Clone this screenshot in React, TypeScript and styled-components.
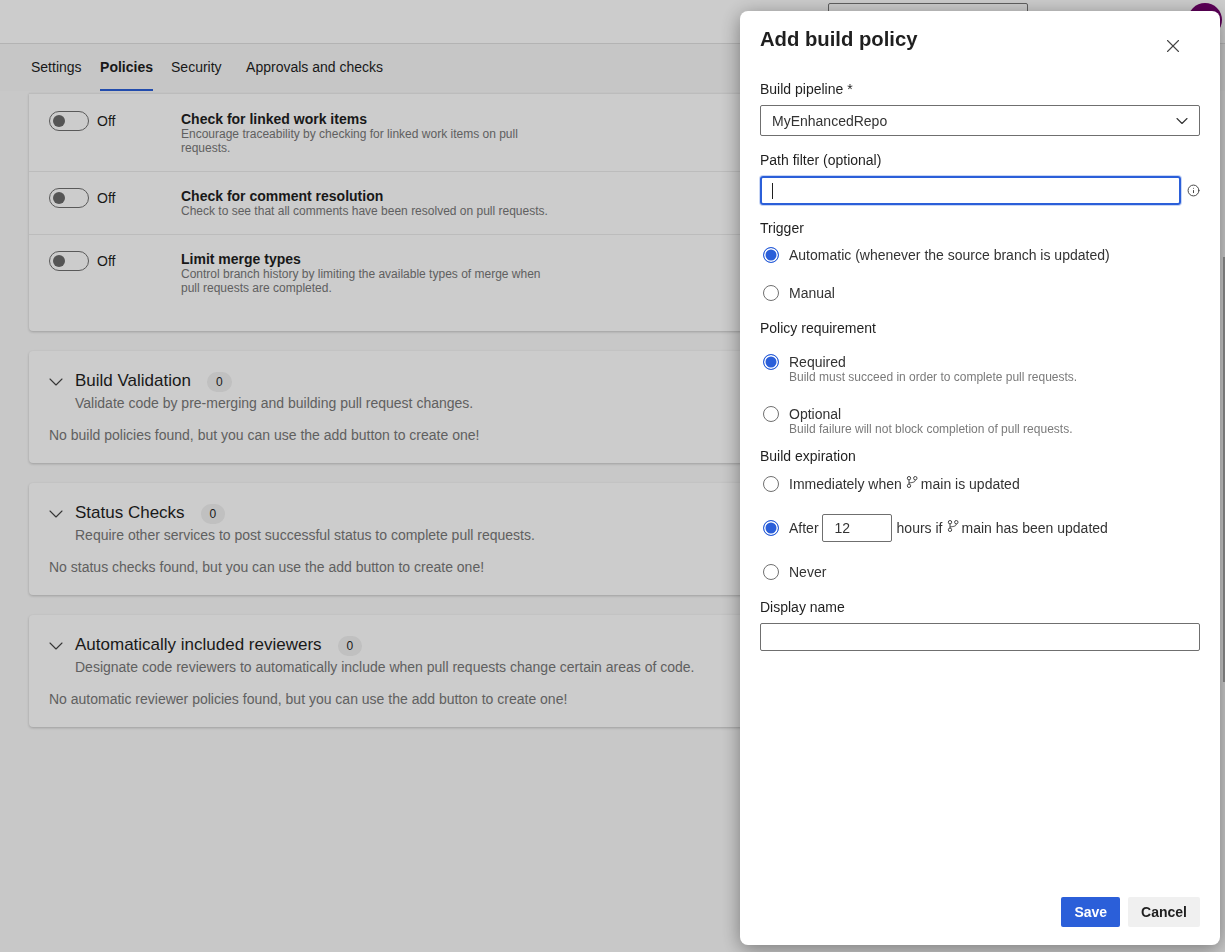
import { createGlobalStyle, styled } from "styled-components";
import { LuChevronDown, LuInfo, LuX } from "react-icons/lu";

const GlobalStyle = createGlobalStyle`
  html, body {
    margin: 0;
    height: 100%;
    overflow: hidden;
    font-family: "Liberation Sans", Arial, sans-serif;
    font-size: 14px;
    color: #1f1f1f;
    background: #fbfbfb;
  }
`;

const Page = styled.div`
  height: 952px;
  display: flex;
  flex-direction: column;
  overflow: hidden;
`;

const TopBar = styled.header`
  height: 40px;
  flex: none;
  display: flex;
  align-items: flex-start;
  padding: 3px 16px 0 828px;
  border-bottom: 1px solid #e0e0e0;
  background: #ffffff;
`;

const SearchBox = styled.div`
  width: 198px;
  height: 30px;
  border: 1px solid #777;
  border-radius: 2px;
`;

const Avatar = styled.div`
  width: 34px;
  height: 34px;
  margin-left: auto;
  margin-right: -13px;
  border-radius: 50%;
  background: #73006e;
`;

const Tabs = styled.nav`
  height: 47px;
  flex: none;
  display: flex;
  padding-left: 31px;
  background: #f8f8f8;
`;

const Tab = styled.div<{ $active?: boolean; $gap: number }>`
  margin-right: ${(p) => p.$gap}px;
  padding-top: 15px;
  line-height: 16px;
  font-weight: ${(p) => (p.$active ? 700 : 400)};
  border-bottom: 2px solid ${(p) => (p.$active ? "#2b5fd9" : "transparent")};
`;

const Content = styled.main`
  flex: 1;
  overflow: hidden;
  display: flex;
  flex-direction: column;
  gap: 20px;
  padding: 2px 30px 0 29px;
`;

const Card = styled.section`
  background: #ffffff;
  border-radius: 4px;
  box-shadow: 0 1px 3px rgba(0, 0, 0, 0.22);
`;

const PolicyCard = styled(Card)`
  height: 238px;
  padding-top: 1px;
  box-sizing: border-box;
  border-radius: 0 0 4px 4px;
  border-top: 1px solid #ececec;
`;

const PolicyRow = styled.div<{ $height: number; $last?: boolean }>`
  height: ${(p) => p.$height}px;
  box-sizing: border-box;
  display: flex;
  padding: 16px 20px 0;
  border-bottom: ${(p) => (p.$last ? "none" : "1px solid #ebebeb")};
`;

const ToggleCell = styled.div`
  width: 132px;
  flex: none;
  display: flex;
  align-items: flex-start;
  gap: 8px;
`;

const Toggle = styled.span`
  width: 40px;
  height: 20px;
  flex: none;
  display: flex;
  align-items: center;
  padding-left: 3px;
  box-sizing: border-box;
  border: 1px solid #707070;
  border-radius: 10px;
`;

const Knob = styled.span`
  width: 12px;
  height: 12px;
  border-radius: 50%;
  background: #6b6b6b;
`;

const OffLabel = styled.span`
  line-height: 20px;
`;

const PolicyText = styled.div`
  width: 375px;
`;

const PolicyTitle = styled.div`
  font-weight: 700;
  line-height: 16px;
`;

const PolicyDesc = styled.div`
  font-size: 12px;
  line-height: 14px;
  color: #787878;
`;

const SectionCard = styled(Card)`
  height: 112px;
  box-sizing: border-box;
  padding: 20px 20px 0;
  display: flex;
  flex-direction: column;
`;

const SectionHead = styled.div`
  display: flex;
  align-items: flex-start;
`;

const Chevron = styled.span`
  width: 31px;
  flex: none;
  margin: -1px 0 -4px -5px;
  display: flex;
  color: #444;
`;

const SectionTitle = styled.div`
  font-size: 17px;
  line-height: 20px;
`;

const Count = styled.span`
  margin-left: 16px;
  margin-top: 1px;
  padding: 0 9px;
  height: 20px;
  border-radius: 10px;
  background: #f0f0f0;
  font-size: 12px;
  line-height: 20px;
  text-align: center;
`;

const SectionDesc = styled.div`
  margin-left: 26px;
  line-height: 16px;
  margin-top: 3px;
  color: #787878;
`;

const EmptyNote = styled.div`
  margin-top: 16px;
  line-height: 16px;
  color: #787878;
`;

const Backdrop = styled.div`
  position: fixed;
  inset: 0;
  background: rgba(0, 0, 0, 0.2);
`;

const ScrollThumb = styled.div`
  position: fixed;
  top: 257px;
  right: 0;
  width: 2px;
  height: 425px;
  background: #8a8a8a;
`;

const Panel = styled.aside`
  position: fixed;
  top: 11px;
  left: 740px;
  width: 480px;
  height: 934px;
  box-sizing: border-box;
  padding: 0 20px;
  display: flex;
  flex-direction: column;
  background: #ffffff;
  border-radius: 8px;
  box-shadow: 0 4px 20px rgba(0, 0, 0, 0.4);
`;

const PanelHead = styled.div`
  height: 70px;
  flex: none;
  display: flex;
  justify-content: space-between;
  align-items: flex-start;
`;

const PanelTitle = styled.h1`
  margin: 15px 0 0;
  font-size: 20.25px;
  line-height: 26px;
  font-weight: 700;
`;

const CloseButton = styled.span`
  margin: 24px 16px 0 0;
  display: flex;
  color: #444;
`;

const FieldLabel = styled.div<{ $top?: number }>`
  line-height: 16px;
  margin-top: ${(p) => p.$top ?? 0}px;
`;

const Select = styled.div`
  margin-top: 8px;
  height: 31px;
  box-sizing: border-box;
  display: flex;
  align-items: center;
  justify-content: space-between;
  padding: 0 7px 0 11px;
  border: 1px solid #6f6f6f;
  border-radius: 2px;
  color: #333;
`;

const FocusRow = styled.div`
  margin-top: 8px;
  display: flex;
  align-items: center;
  justify-content: space-between;
`;

const FocusInput = styled.div`
  width: 421px;
  height: 29px;
  box-sizing: border-box;
  display: flex;
  align-items: center;
  padding-left: 10px;
  border: 2px solid #2b5fd9;
  border-radius: 3px;
  box-shadow: 0 0 0 1px #c8d6f5;
`;

const Caret = styled.span`
  width: 1px;
  height: 16px;
  background: #1f1f1f;
`;

const InfoIcon = styled.span`
  display: flex;
  color: #444;
`;

const TextBox = styled.div`
  margin-top: 8px;
  height: 28px;
  box-sizing: border-box;
  border: 1px solid #6f6f6f;
  border-radius: 2px;
`;

const RadioRow = styled.div<{ $top: number; $height: number }>`
  margin-top: ${(p) => p.$top}px;
  height: ${(p) => p.$height}px;
  display: flex;
  align-items: center;
  gap: 10px;
  padding-left: 3px;
`;

const Radio = styled.span<{ $on?: boolean }>`
  width: 16px;
  height: 16px;
  flex: none;
  box-sizing: border-box;
  border: ${(p) => (p.$on ? "1.5px solid #2b5fd9" : "1px solid #707070")};
  border-radius: 50%;
  background: ${(p) => (p.$on ? "#2b5fd9" : "#fff")};
  box-shadow: ${(p) => (p.$on ? "inset 0 0 0 1.5px #fff" : "none")};
`;

const RadioBlock = styled.div`
  display: flex;
  flex-direction: column;
  color: #333;
`;

const RadioText = styled.div`
  line-height: 16px;
  color: #333;
  display: flex;
  align-items: center;
`;

const RadioHint = styled.div`
  font-size: 12px;
  line-height: 14px;
  color: #7a7a7a;
`;

const StackRadio = styled.div<{ $top: number }>`
  margin-top: ${(p) => p.$top}px;
  display: flex;
  align-items: flex-start;
  gap: 10px;
  padding-left: 3px;
`;

const HoursInput = styled.div`
  width: 70px;
  height: 28px;
  box-sizing: border-box;
  margin: 0 5px 0 3px;
  padding-left: 12px;
  border: 1px solid #6f6f6f;
  border-radius: 2px;
  line-height: 26px;
`;

const BranchSvg = styled.svg`
  width: 12px;
  height: 12px;
  margin: -4px 3px 0 4px;
  fill: none;
  stroke: #444;
  stroke-width: 1;
`;

const PanelFoot = styled.div`
  margin-top: auto;
  padding-bottom: 18px;
  display: flex;
  justify-content: flex-end;
  gap: 8px;
`;

const Button = styled.button<{ $primary?: boolean }>`
  height: 30px;
  padding: 0 13px;
  border: none;
  border-radius: 2px;
  font: 700 14px "Liberation Sans", Arial, sans-serif;
  color: ${(p) => (p.$primary ? "#fff" : "#1f1f1f")};
  background: ${(p) => (p.$primary ? "#2b5fd9" : "#f0f0f0")};
`;

function BranchIcon() {
  return (
    <BranchSvg viewBox="0 0 12 12">
      <circle cx="3" cy="2.2" r="1.7" />
      <circle cx="9.3" cy="2.2" r="1.7" />
      <circle cx="3" cy="9.8" r="1.7" />
      <path d="M3 3.9v4.2M9.3 3.9c0 2.2-2.2 2.6-6.3 3" />
    </BranchSvg>
  );
}

const policies = [
  {
    title: "Check for linked work items",
    desc: "Encourage traceability by checking for linked work items on pull requests.",
    height: 77,
  },
  {
    title: "Check for comment resolution",
    desc: "Check to see that all comments have been resolved on pull requests.",
    height: 63,
  },
  {
    title: "Limit merge types",
    desc: "Control branch history by limiting the available types of merge when pull requests are completed.",
    height: 95,
  },
];

const sections = [
  {
    title: "Build Validation",
    desc: "Validate code by pre-merging and building pull request changes.",
    note: "No build policies found, but you can use the add button to create one!",
  },
  {
    title: "Status Checks",
    desc: "Require other services to post successful status to complete pull requests.",
    note: "No status checks found, but you can use the add button to create one!",
  },
  {
    title: "Automatically included reviewers",
    desc: "Designate code reviewers to automatically include when pull requests change certain areas of code.",
    note: "No automatic reviewer policies found, but you can use the add button to create one!",
  },
];

export default function App() {
  return (
    <>
      <GlobalStyle />
      <Page>
        <TopBar>
          <SearchBox />
          <Avatar />
        </TopBar>
        <Tabs>
          <Tab $gap={18.5}>Settings</Tab>
          <Tab $gap={18} $active>
            Policies
          </Tab>
          <Tab $gap={24.5}>Security</Tab>
          <Tab $gap={0}>Approvals and checks</Tab>
        </Tabs>
        <Content>
          <PolicyCard>
            {policies.map((item, i) => (
              <PolicyRow key={item.title} $height={item.height} $last={i === 2}>
                <ToggleCell>
                  <Toggle>
                    <Knob />
                  </Toggle>
                  <OffLabel>Off</OffLabel>
                </ToggleCell>
                <PolicyText>
                  <PolicyTitle>{item.title}</PolicyTitle>
                  <PolicyDesc>{item.desc}</PolicyDesc>
                </PolicyText>
              </PolicyRow>
            ))}
          </PolicyCard>
          {sections.map((s) => (
            <SectionCard key={s.title}>
              <SectionHead>
                <Chevron>
                  <LuChevronDown size={24} strokeWidth={1.1} />
                </Chevron>
                <SectionTitle>{s.title}</SectionTitle>
                <Count>0</Count>
              </SectionHead>
              <SectionDesc>{s.desc}</SectionDesc>
              <EmptyNote>{s.note}</EmptyNote>
            </SectionCard>
          ))}
        </Content>
      </Page>
      <Backdrop />
      <ScrollThumb />
      <Panel>
        <PanelHead>
          <PanelTitle>Add build policy</PanelTitle>
          <CloseButton>
            <LuX size={22} strokeWidth={1.2} />
          </CloseButton>
        </PanelHead>
        <FieldLabel>Build pipeline *</FieldLabel>
        <Select>
          MyEnhancedRepo
          <LuChevronDown size={20} strokeWidth={1.3} />
        </Select>
        <FieldLabel $top={16}>Path filter (optional)</FieldLabel>
        <FocusRow>
          <FocusInput>
            <Caret />
          </FocusInput>
          <InfoIcon>
            <LuInfo size={13} strokeWidth={1.8} />
          </InfoIcon>
        </FocusRow>
        <FieldLabel $top={15}>Trigger</FieldLabel>
        <RadioRow $top={0} $height={38}>
          <Radio $on />
          <RadioText>Automatic (whenever the source branch is updated)</RadioText>
        </RadioRow>
        <RadioRow $top={0} $height={38}>
          <Radio />
          <RadioText>Manual</RadioText>
        </RadioRow>
        <FieldLabel $top={8}>Policy requirement</FieldLabel>
        <StackRadio $top={18}>
          <Radio $on />
          <RadioBlock>
            <RadioText>Required</RadioText>
            <RadioHint>Build must succeed in order to complete pull requests.</RadioHint>
          </RadioBlock>
        </StackRadio>
        <StackRadio $top={22}>
          <Radio />
          <RadioBlock>
            <RadioText>Optional</RadioText>
            <RadioHint>Build failure will not block completion of pull requests.</RadioHint>
          </RadioBlock>
        </StackRadio>
        <FieldLabel $top={12}>Build expiration</FieldLabel>
        <RadioRow $top={1} $height={38}>
          <Radio />
          <RadioText>
            Immediately when
            <BranchIcon />
            main is updated
          </RadioText>
        </RadioRow>
        <RadioRow $top={0} $height={50}>
          <Radio $on />
          <RadioText>
            After
            <HoursInput>12</HoursInput>
            hours if
            <BranchIcon />
            main has been updated
          </RadioText>
        </RadioRow>
        <RadioRow $top={0} $height={38}>
          <Radio />
          <RadioText>Never</RadioText>
        </RadioRow>
        <FieldLabel $top={8}>Display name</FieldLabel>
        <TextBox />
        <PanelFoot>
          <Button $primary>Save</Button>
          <Button>Cancel</Button>
        </PanelFoot>
      </Panel>
    </>
  );
}
